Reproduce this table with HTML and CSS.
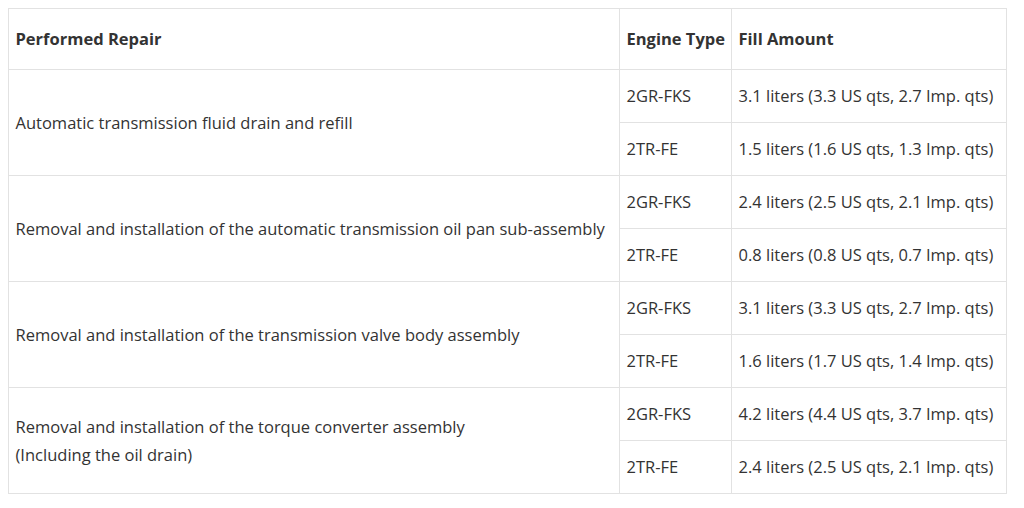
FILE: index.html
```html
<!DOCTYPE html>
<html>
<head>
<meta charset="utf-8">
<link rel="stylesheet" href="styles.css">
</head>
<body>
<table class="fill-table">
  <colgroup>
    <col class="c-repair">
    <col class="c-engine">
    <col class="c-fill">
  </colgroup>
  <thead>
    <tr>
      <th>Performed Repair</th>
      <th>Engine Type</th>
      <th>Fill Amount</th>
    </tr>
  </thead>
  <tbody>
    <tr>
      <td rowspan="2">Automatic transmission fluid drain and refill</td>
      <td>2GR-FKS</td>
      <td>3.1 liters (3.3 US qts, 2.7 Imp. qts)</td>
    </tr>
    <tr>
      <td>2TR-FE</td>
      <td>1.5 liters (1.6 US qts, 1.3 Imp. qts)</td>
    </tr>
    <tr>
      <td rowspan="2">Removal and installation of the automatic transmission oil pan sub-assembly</td>
      <td>2GR-FKS</td>
      <td>2.4 liters (2.5 US qts, 2.1 Imp. qts)</td>
    </tr>
    <tr>
      <td>2TR-FE</td>
      <td>0.8 liters (0.8 US qts, 0.7 Imp. qts)</td>
    </tr>
    <tr>
      <td rowspan="2">Removal and installation of the transmission valve body assembly</td>
      <td>2GR-FKS</td>
      <td>3.1 liters (3.3 US qts, 2.7 Imp. qts)</td>
    </tr>
    <tr>
      <td>2TR-FE</td>
      <td>1.6 liters (1.7 US qts, 1.4 Imp. qts)</td>
    </tr>
    <tr>
      <td rowspan="2">Removal and installation of the torque converter assembly<br>(Including the oil drain)</td>
      <td>2GR-FKS</td>
      <td>4.2 liters (4.4 US qts, 3.7 Imp. qts)</td>
    </tr>
    <tr>
      <td>2TR-FE</td>
      <td>2.4 liters (2.5 US qts, 2.1 Imp. qts)</td>
    </tr>
  </tbody>
</table>
</body>
</html>
```
FILE: styles.css
```css
html, body {
  background: #ffffff;
}
body {
  margin: 8px;
  font-family: "Open Sans", "Liberation Sans", sans-serif;
  font-size: 16.5px;
  color: #333333;
}
.fill-table {
  width: 998px;
  border-collapse: collapse;
  table-layout: fixed;
}
.c-repair { width: 611px; }
.c-engine { width: 112px; }
.c-fill { width: 275px; }
.fill-table th,
.fill-table td {
  border: 1px solid #e2e2e2;
  padding: 12px 6.5px;
  line-height: 28px;
  text-align: left;
  vertical-align: middle;
  white-space: nowrap;
}
.fill-table th {
  font-weight: 700;
  padding-top: 16px;
  padding-bottom: 16px;
}
```
